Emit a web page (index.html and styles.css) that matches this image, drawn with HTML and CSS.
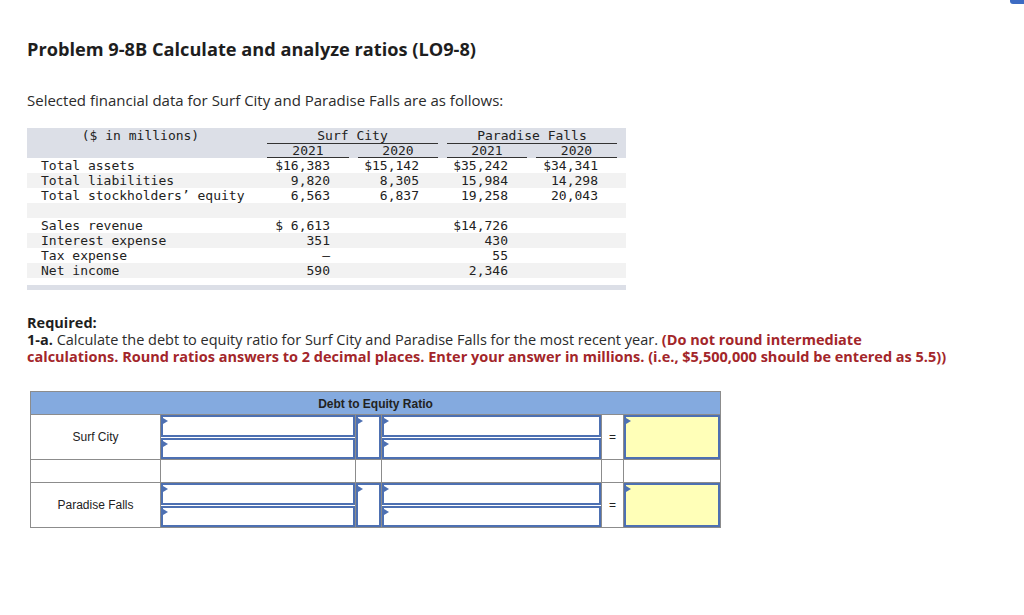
FILE: index.html
```html
<!DOCTYPE html>
<html lang="en">
<head>
<meta charset="utf-8">
<title>Problem 9-8B</title>
<link rel="stylesheet" href="styles.css">
</head>
<body>
<div class="corner"></div>
<main class="page">
  <h1 class="title">Problem 9-8B Calculate and analyze ratios (LO9-8)</h1>
  <p class="intro">Selected financial data for Surf City and Paradise Falls are as follows:</p>

  <div class="fin">
    <div class="fin-head">
      <div class="hrow hrow-top">
        <div class="hlbl">($ in millions)</div>
        <div class="grp">Surf City</div>
        <div class="grp">Paradise Falls</div>
      </div>
      <div class="hrow hrow-yr">
        <div></div>
        <div class="yr">2021</div>
        <div class="yr">2020</div>
        <div class="yr">2021</div>
        <div class="yr">2020</div>
      </div>
    </div>
    <div class="frow"><div class="lbl">Total assets</div><div class="num">$16,383</div><div class="num">$15,142</div><div class="num">$35,242</div><div class="num">$34,341</div></div>
    <div class="frow alt"><div class="lbl">Total liabilities</div><div class="num">9,820</div><div class="num">8,305</div><div class="num">15,984</div><div class="num">14,298</div></div>
    <div class="frow"><div class="lbl">Total stockholders’ equity</div><div class="num">6,563</div><div class="num">6,837</div><div class="num">19,258</div><div class="num">20,043</div></div>
    <div class="frow alt"><div class="lbl"></div></div>
    <div class="frow"><div class="lbl">Sales revenue</div><div class="num">$ 6,613</div><div class="num"></div><div class="num">$14,726</div><div class="num"></div></div>
    <div class="frow alt"><div class="lbl">Interest expense</div><div class="num">351</div><div class="num"></div><div class="num">430</div><div class="num"></div></div>
    <div class="frow"><div class="lbl">Tax expense</div><div class="num">–</div><div class="num"></div><div class="num">55</div><div class="num"></div></div>
    <div class="frow alt"><div class="lbl">Net income</div><div class="num">590</div><div class="num"></div><div class="num">2,346</div><div class="num"></div></div>
    <div class="fin-foot"></div>
  </div>

  <section class="req">
    <p class="req-title">Required:</p>
    <p class="req-text"><b>1-a.</b> Calculate the debt to equity ratio for Surf City and Paradise Falls for the most recent year. <strong class="red">(Do not round intermediate calculations. Round ratios answers to 2 decimal places. Enter your answer in millions. (i.e., $5,500,000 should be entered as 5.5))</strong></p>
  </section>

  <div class="ans">
    <div class="ans-head">Debt to Equity Ratio</div>

    <div class="cell name">Surf City</div>
    <div class="cell stack"><div class="box"></div><div class="box"></div></div>
    <div class="cell"><div class="box full"></div></div>
    <div class="cell stack"><div class="box"></div><div class="box"></div></div>
    <div class="cell eq">=</div>
    <div class="cell"><div class="box full yellow"></div></div>

    <div class="cell"></div>
    <div class="cell"></div>
    <div class="cell"></div>
    <div class="cell"></div>
    <div class="cell"></div>
    <div class="cell"></div>

    <div class="cell name">Paradise Falls</div>
    <div class="cell stack"><div class="box"></div><div class="box"></div></div>
    <div class="cell"><div class="box full"></div></div>
    <div class="cell stack"><div class="box"></div><div class="box"></div></div>
    <div class="cell eq">=</div>
    <div class="cell"><div class="box full yellow"></div></div>
  </div>
</main>
</body>
</html>
```
FILE: styles.css
```css
* { box-sizing: border-box; }

html, body {
  margin: 0;
  padding: 0;
  background: #ffffff;
}

body {
  font-family: "Open Sans", "Lato", sans-serif;
  color: #2b2b2b;
  width: 1024px;
  height: 615px;
  overflow: hidden;
  position: relative;
}

.corner {
  position: absolute;
  top: 0;
  right: 0;
  width: 14px;
  height: 4px;
  background: #3d6bc3;
  border-bottom-left-radius: 3px;
}

.page {
  padding: 40px 0 0 27px;
}

.title {
  margin: 0;
  font-size: 18.2px;
  line-height: 18px;
  font-weight: 700;
  color: #1e1e1e;
}

.intro {
  margin: 33px 0 0;
  font-size: 15px;
  line-height: 18px;
  color: #2b2b2b;
}

/* financial data table */
.fin {
  margin-top: 19px;
  width: 599px;
  font-family: "DejaVu Sans Mono", monospace;
  font-size: 13px;
  color: #222;
}

.fin-head {
  background: #dcdfe7;
}

.hrow, .frow {
  display: grid;
  grid-template-columns: 231px 82px 80px 80px 81px;
  column-gap: 9px;
}

.hrow-top {
  height: 16px;
  line-height: 15px;
}

.hlbl {
  text-align: center;
  padding-right: 4px;
}

.grp {
  grid-column: span 2;
  text-align: center;
  border-bottom: 1px solid #333;
}

.hrow-yr {
  height: 14px;
  line-height: 13px;
}

.yr {
  text-align: center;
  border-bottom: 1px solid #333;
}

.frow {
  height: 15px;
  line-height: 15px;
}

.frow.alt {
  background: #f2f2f2;
}

.lbl {
  padding-left: 14px;
  white-space: pre;
}

.num {
  text-align: right;
  padding-right: 19px;
}

.fin-foot {
  margin-top: 7px;
  height: 5px;
  background: #dcdfe7;
}

/* required */
.req {
  margin-top: 24px;
  font-size: 14.5px;
  line-height: 17px;
  color: #2b2b2b;
}

.req p {
  margin: 0;
}

.req-title {
  font-weight: 700;
  color: #1e1e1e;
}

.req-text {
  width: 925px;
}

.req-text b {
  color: #1e1e1e;
}

.red {
  color: #a3262a;
  font-weight: 700;
}

/* answer table */
.ans {
  margin: 26px 0 0 3px;
  width: 691px;
  display: grid;
  grid-template-columns: 129px 194px 25px 219px 21px 96px;
  grid-template-rows: 22px 44px 22px 44px;
  gap: 1px;
  padding: 1px;
  background: #8c8c8c;
  font-family: "Liberation Sans", Arial, sans-serif;
  font-size: 12px;
  color: #222;
}

.ans-head {
  grid-column: 1 / -1;
  background: #84aadf;
  font-weight: 700;
  text-align: center;
  line-height: 22px;
  padding-top: 1px;
}

.cell {
  background: #fff;
}

.name, .eq {
  display: flex;
  align-items: center;
  justify-content: center;
}

.stack {
  display: flex;
  flex-direction: column;
  gap: 1px;
}

.box {
  position: relative;
  flex: 1;
  border: 2px solid #4d70b2;
  background: #fff;
}

.box::before {
  content: "";
  position: absolute;
  top: 1px;
  left: 0;
  border-left: 5px solid #4d70b2;
  border-top: 3px solid transparent;
  border-bottom: 3px solid transparent;
}

.box.full {
  height: 100%;
}

.box.yellow {
  background: #ffffb8;
}
```
